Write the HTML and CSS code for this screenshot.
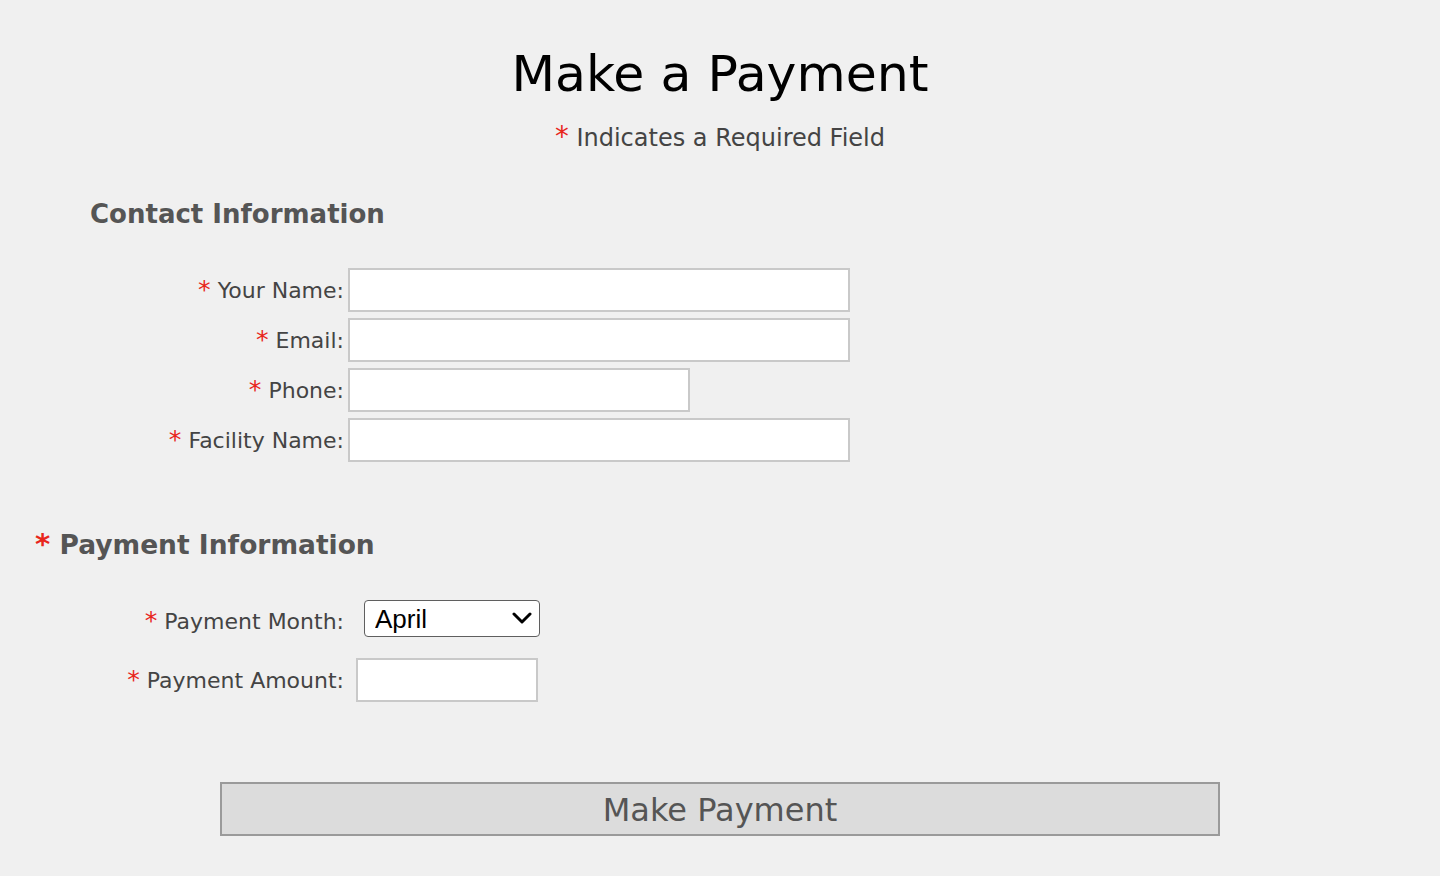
FILE: index.html
```html
<!DOCTYPE html>
<html lang="en">
<head>
<meta charset="utf-8">
<title>Make a Payment</title>
<link rel="stylesheet" href="styles.css">
</head>
<body>
<form class="page">
  <h1 class="title">Make a Payment</h1>
  <p class="note"><span class="req">*</span> Indicates a Required Field</p>

  <h2 class="section contact-head">Contact Information</h2>
  <div class="grid contact-grid">
    <label class="label" for="name"><span class="req">*</span> Your Name:</label>
    <input class="field wide" id="name" type="text">
    <label class="label" for="email"><span class="req">*</span> Email:</label>
    <input class="field wide" id="email" type="text">
    <label class="label" for="phone"><span class="req">*</span> Phone:</label>
    <input class="field mid" id="phone" type="text">
    <label class="label" for="facility"><span class="req">*</span> Facility Name:</label>
    <input class="field wide" id="facility" type="text">
  </div>

  <h2 class="section payment-head"><span class="req">*</span> Payment Information</h2>
  <div class="grid payment-grid">
    <label class="label month-label" for="month"><span class="req">*</span> Payment Month:</label>
    <div class="select-wrap">
      <select class="select" id="month">
        <option>January</option><option>February</option><option>March</option>
        <option selected>April</option><option>May</option><option>June</option>
        <option>July</option><option>August</option><option>September</option>
        <option>October</option><option>November</option><option>December</option>
      </select>
      <svg class="chev" width="20" height="12" viewBox="0 0 20 12"><path d="M2 2 L10 10 L18 2" fill="none" stroke="#000" stroke-width="3" stroke-linecap="round" stroke-linejoin="round"/></svg>
    </div>
    <label class="label" for="amount"><span class="req">*</span> Payment Amount:</label>
    <input class="field small" id="amount" type="text">
  </div>

  <div class="actions">
    <button class="submit" type="button">Make Payment</button>
  </div>
</form>
</body>
</html>
```

FILE: styles.css
```css
html, body {
  margin: 0;
  padding: 0;
  background: #f0f0f0;
}
body {
  font-family: "DejaVu Sans", Verdana, sans-serif;
  color: #444;
}
.page {
  display: flex;
  flex-direction: column;
  padding-top: 44px;
}
.title {
  margin: 0;
  text-align: center;
  font-size: 50.5px;
  line-height: 60px;
  font-weight: normal;
  color: #000;
}
.note {
  margin: 19px 0 0;
  text-align: center;
  font-size: 24px;
  line-height: 30px;
  color: #444;
}
.req {
  color: #e8261c;
  font-size: 1.15em;
  line-height: 1;
}
.section {
  margin: 0;
  font-size: 26px;
  line-height: 32px;
  font-weight: bold;
  color: #555;
}
.section .req {
  font-size: 1.1em;
}
.contact-head {
  margin-top: 45px;
  padding-left: 90px;
}
.payment-head {
  margin-top: 67px;
  padding-left: 35px;
  font-size: 26.5px;
}
.grid {
  display: grid;
  grid-template-columns: 344px auto;
  justify-content: start;
  align-items: center;
}
.contact-grid {
  margin-top: 38px;
  row-gap: 6px;
  column-gap: 4px;
}
.payment-grid {
  margin-top: 39px;
  row-gap: 21px;
  column-gap: 12px;
}
.label {
  justify-self: end;
  font-size: 22px;
  line-height: 26px;
  color: #444;
  white-space: nowrap;
}
.month-label {
  padding-top: 6px;
}
.field {
  box-sizing: border-box;
  height: 44px;
  border: 2px solid #c9c9c9;
  background: #fff;
  margin: 0;
  padding: 0 6px;
  font-size: 20px;
}
.wide { width: 502px; }
.mid { width: 342px; }
.small { width: 182px; }
.select-wrap {
  position: relative;
  width: 176px;
  height: 37px;
  margin-left: 8px;
}
.select {
  appearance: none;
  -webkit-appearance: none;
  box-sizing: border-box;
  width: 176px;
  height: 37px;
  margin: 0;
  padding: 0 0 0 10px;
  border: 1.5px solid #5f5f5f;
  border-radius: 4px;
  background: #fff;
  font-family: "Liberation Sans", Arial, sans-serif;
  font-size: 26px;
  color: #000;
}
.chev {
  position: absolute;
  right: 8px;
  top: 12px;
  pointer-events: none;
}
.actions {
  display: flex;
  justify-content: center;
  margin-top: 80px;
}
.submit {
  box-sizing: border-box;
  width: 1000px;
  height: 54px;
  margin: 0;
  padding: 2px 0 0;
  border: 2px solid #9a9a9a;
  background: #dcdcdc;
  font-family: "DejaVu Sans", Verdana, sans-serif;
  font-size: 32px;
  color: #555;
}
```
